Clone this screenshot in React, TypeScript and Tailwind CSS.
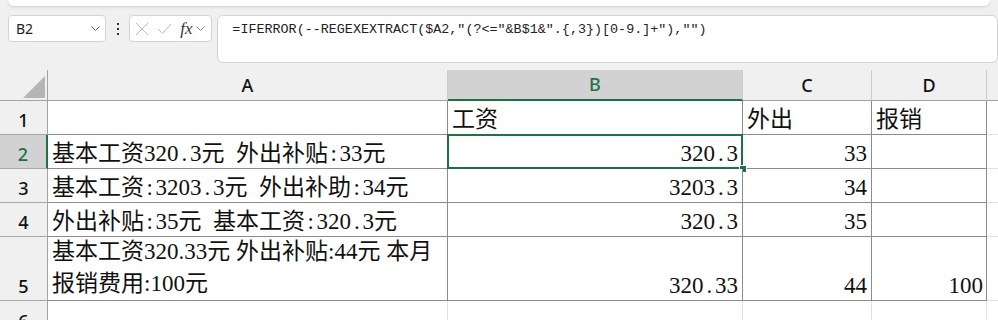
import React from 'react';

// Excel-like sheet with a regex formula in the formula bar

const cellFont = "font-['Liberation_Serif','Noto_Sans_CJK_SC',serif] text-[23px] text-[#111]";
const headFont = "font-['Noto_Sans','Open_Sans',sans-serif] text-[18px] font-medium";

// SimSun-style: half-width punctuation sits in a 0.5em box
const Sim: React.FC<{ text: string }> = ({ text }) => (
  <>
    {text.split('').map((ch, i) =>
      ch === '.' || ch === ':' || ch === ' ' ? (
        <span key={i} className="inline-block w-[0.5em] text-center">
          {ch === ' ' ? '\u00a0' : ch}
        </span>
      ) : (
        <span key={i}>{ch}</span>
      )
    )}
  </>
);

interface RowData {
  n: number;
  a: React.ReactNode;
  b: string;
  c: string;
  d: string;
  tall?: boolean;
  labels?: boolean;
}

const rows: RowData[] = [
  { n: 1, a: '', b: '工资', c: '外出', d: '报销', labels: true },
  { n: 2, a: <Sim text="基本工资320.3元 外出补贴:33元" />, b: '320.3', c: '33', d: '' },
  { n: 3, a: <Sim text="基本工资:3203.3元 外出补助:34元" />, b: '3203.3', c: '34', d: '' },
  { n: 4, a: <Sim text="外出补贴:35元 基本工资:320.3元" />, b: '320.3', c: '35', d: '' },
  {
    n: 5,
    a: (
      <div className="leading-[32px] whitespace-nowrap">
        基本工资320.33元 外出补贴:44元 本月
        <br />
        报销费用:100元
      </div>
    ),
    b: '320.33',
    c: '44',
    d: '100',
    tall: true,
  },
];

const Chevron: React.FC<{ className?: string }> = ({ className }) => (
  <svg width="9" height="5" viewBox="0 0 9 5" className={className}>
    <polyline points="0.5,0.5 4.5,4.5 8.5,0.5" fill="none" stroke="currentColor" strokeWidth="1" />
  </svg>
);

const FormulaBar: React.FC = () => (
  <div className="h-[70px] flex flex-col">
    <div className="mx-2 h-[6px] bg-white rounded-b-[8px] shadow-[0_1px_3px_rgba(0,0,0,0.15)]" />
    <div className="mt-[9px] flex items-start pl-2 font-['Noto_Sans','Open_Sans',sans-serif]">
      <div className="w-[100px] h-[27px] bg-white border border-[#d4d4d4] rounded-[4px] flex items-center justify-between pl-[7px] pr-[5px] text-[14px] text-[#222]">
        <span>B2</span>
        <Chevron className="text-[#555]" />
      </div>
      <div className="w-[24px] h-[27px] flex flex-col items-center justify-center gap-[3px]">
        <div className="w-[2px] h-[2px] bg-[#333]" />
        <div className="w-[2px] h-[2px] bg-[#333]" />
        <div className="w-[2px] h-[2px] bg-[#333]" />
      </div>
      <div className="w-[85px] h-[27px] bg-white border border-[#d4d4d4] rounded-[4px] flex items-center pl-[5px] gap-[8px]">
        <svg width="14" height="14" viewBox="0 0 14 14">
          <path d="M1 1 L13 13 M13 1 L1 13" stroke="#bdbdbd" strokeWidth="1" fill="none" />
        </svg>
        <svg width="15" height="12" viewBox="0 0 15 12">
          <path d="M1 6 L5.5 10.5 L14 1" stroke="#bdbdbd" strokeWidth="1" fill="none" />
        </svg>
        <div className="flex items-center gap-[3px]">
          <span className="font-['Liberation_Serif',serif] italic text-[17px] leading-none text-[#333]">fx</span>
          <Chevron className="text-[#888]" />
        </div>
      </div>
      <div className="ml-[5px] w-[800px] h-[48px] bg-white border border-[#d4d4d4] rounded-[6px] pl-[14px] pt-[4px] font-['Liberation_Mono',monospace] text-[13.4px] text-[#222] whitespace-nowrap">
        =IFERROR(--REGEXEXTRACT($A2,"(?&lt;="&amp;B$1&amp;".{'{'},3{'}'})[0-9.]+"),"")
      </div>
    </div>
  </div>
);

const ColHeader: React.FC<{ label: string; w: string; selected?: boolean }> = ({ label, w, selected }) => (
  <div
    className={`${w} h-full border-r border-r-[#cbcbcb] flex items-center justify-center ${headFont} ${
      selected ? 'bg-[#d2d2d2] text-[#1e7145] border-b-2 border-b-[#1e7145]' : 'text-[#111] border-b border-b-[#a3a3a3]'
    }`}
  >
    {label}
  </div>
);

export default function App() {
  return (
    <div className="w-[998px] h-[320px] overflow-hidden bg-[#f0f0f0]">
      <FormulaBar />

      {/* column headers */}
      <div className="flex h-[31px]">
        <div className="w-[48px] h-full border-r border-r-[#a3a3a3] border-b border-b-[#a3a3a3] flex items-end justify-end pr-[2px] pb-[2px]">
          <svg width="22" height="22" viewBox="0 0 22 22">
            <polygon points="22,0 22,22 0,22" fill="#b5b5b5" />
          </svg>
        </div>
        <ColHeader label="A" w="w-[400px]" />
        <ColHeader label="B" w="w-[295px]" selected />
        <ColHeader label="C" w="w-[129px]" />
        <ColHeader label="D" w="w-[115px]" />
        <div className="flex-1 h-full border-b border-b-[#a3a3a3]" />
      </div>

      {/* rows */}
      {rows.map((r) => {
        const sel = r.n === 2;
        const h = r.tall ? 'h-[64px]' : 'h-[34px]';
        const cell = 'border-r border-b border-[#8c8c8c] bg-white flex items-end leading-[28px] whitespace-nowrap';
        return (
          <div key={r.n} className={`flex ${h}`}>
            <div
              className={`w-[48px] h-full flex items-end justify-center pb-[2px] leading-[24px] border-b border-b-[#a8a8a8] ${headFont} ${
                sel
                  ? 'bg-[#d2d2d2] text-[#1e7145] border-r-2 border-r-[#1e7145]'
                  : 'bg-[#f0f0f0] text-[#111] border-r border-r-[#a3a3a3]'
              }`}
            >
              {r.n}
            </div>
            <div className={`w-[400px] h-full pl-[4px] ${cell} ${cellFont}`}>{r.a}</div>
            <div className={`relative w-[295px] h-full ${cell} ${cellFont} ${r.labels ? 'pl-[4px]' : 'justify-end pr-[4px]'}`}>
              {r.labels ? r.b : <Sim text={r.b} />}
              {sel && (
                <>
                  <div className="absolute -left-px -top-px -right-px -bottom-px border-2 border-[#1e7145]" />
                  <div className="absolute -right-[4px] -bottom-[4px] w-[6px] h-[6px] bg-[#1e7145] outline outline-1 outline-white" />
                </>
              )}
            </div>
            <div className={`w-[129px] h-full ${cell} ${cellFont} ${r.labels ? 'pl-[4px]' : 'justify-end pr-[4px]'}`}>
              {r.labels ? r.c : <Sim text={r.c} />}
            </div>
            <div className={`w-[115px] h-full ${cell} ${cellFont} ${r.labels ? 'pl-[4px]' : 'justify-end pr-[3px]'}`}>
              {r.labels ? r.d : <Sim text={r.d} />}
            </div>
            <div className="flex-1 h-full bg-white border-b border-b-[#e1e1e1]" />
          </div>
        );
      })}

      {/* row 6 */}
      <div className="flex h-[34px]">
        <div className={`w-[48px] h-full bg-[#f0f0f0] border-r border-r-[#a3a3a3] flex items-end justify-center pb-[2px] leading-[24px] text-[#111] ${headFont}`}>
          6
        </div>
        <div className="w-[400px] h-full bg-white border-r border-[#e1e1e1]" />
        <div className="w-[295px] h-full bg-white border-r border-[#e1e1e1]" />
        <div className="w-[129px] h-full bg-white border-r border-[#e1e1e1]" />
        <div className="w-[115px] h-full bg-white border-r border-[#e1e1e1]" />
        <div className="flex-1 h-full bg-white" />
      </div>
    </div>
  );
}
